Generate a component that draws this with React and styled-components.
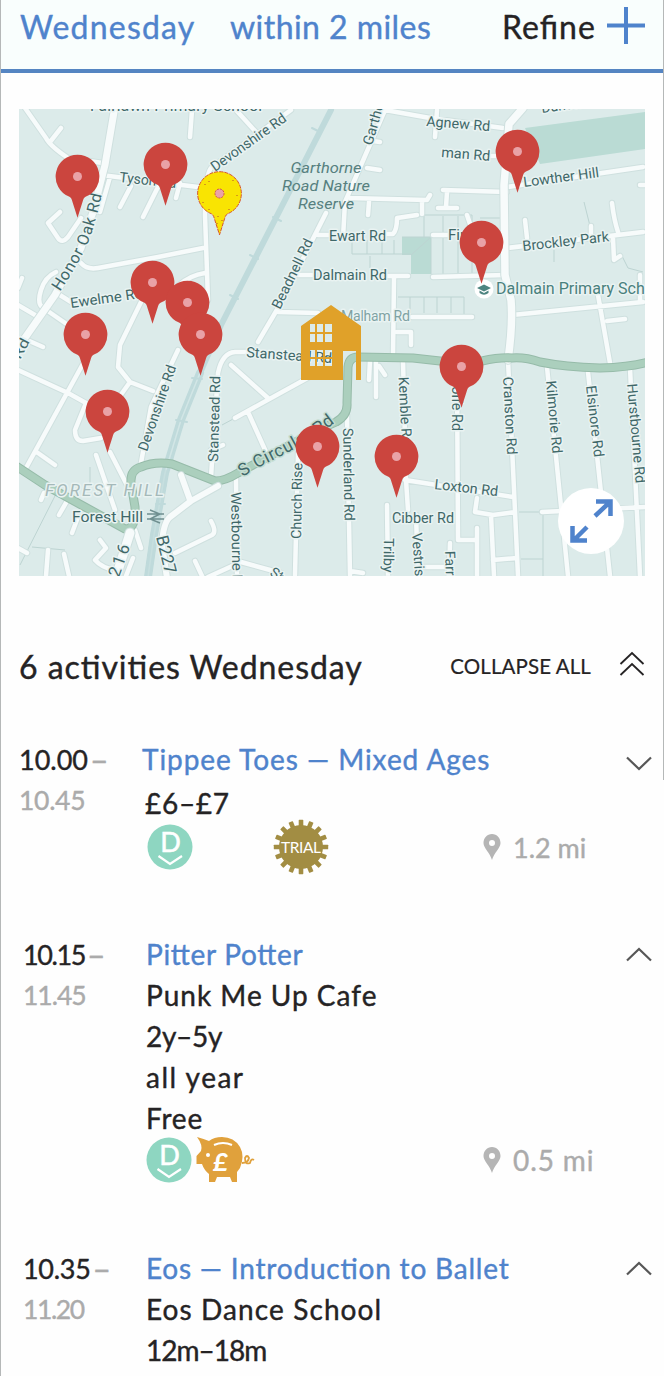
import React from "react";
import styled, { createGlobalStyle } from "styled-components";

const GlobalStyle = createGlobalStyle`
  * { box-sizing: border-box; }
  body { margin: 0; background: #fff; }
`;

const blue = "#4f83cc";
const ink = "#252324";
const grey = "#ababab";

const Page = styled.main`
  position: relative;
  width: 664px;
  height: 1376px;
  overflow: hidden;
  border-left: 1px solid #b5b8b8;
  font-family: Lato, "Liberation Sans", sans-serif;
  color: ${ink};
  background: #fefefe;
`;

const EdgeRule = styled.div`
  position: absolute;
  top: 0;
  right: 0;
  width: 1px;
  height: 780px;
  background: #b5b8b8;
`;

const FilterBar = styled.header`
  display: flex;
  align-items: flex-start;
  height: 73px;
  padding: 5px 19px 0 19px;
  border-bottom: 4px solid #5585c2;
  background: #f9fefd;
`;

const Label = styled.span`
  display: block;
  white-space: nowrap;
  color: ${(p) => p.$color || "inherit"};
  font-size: ${(p) => p.$size || 28}px;
  line-height: ${(p) => p.$line || 41}px;
  letter-spacing: ${(p) => p.$track || 0}px;
  font-feature-settings: "liga" 1;
  -webkit-text-stroke: ${(p) => (p.$stroke ?? 0.4)}px currentColor;
`;

const FilterLabel = styled(Label)`
  width: ${(p) => p.$width}px;
`;

const Spacer = styled.div`
  flex: 1;
`;

const PlusIcon = styled.svg`
  width: 38px;
  height: 40px;
`;

const MapPanel = styled.section`
  position: relative;
  width: 626px;
  height: 467px;
  margin: 36px 0 0 18px;
  overflow: hidden;
  background: #dcebea;
`;

const MapArt = styled.svg`
  display: block;
  width: 626px;
  height: 467px;
  font-family: Roboto, sans-serif;
`;

const Marker = styled.svg`
  position: absolute;
  left: ${(p) => p.$x - 19 - 22.5}px;
  top: ${(p) => p.$y - 109 - 23}px;
  width: 45px;
  height: 65px;
`;

const House = styled.svg`
  position: absolute;
  left: 281px;
  top: 195px;
  width: 62px;
  height: 77px;
`;

const ExpandButton = styled.button`
  position: absolute;
  right: 21px;
  bottom: 22px;
  width: 66px;
  height: 66px;
  padding: 0;
  border: 0;
  border-radius: 50%;
  background: #fff;
`;

const SummaryBar = styled.div`
  display: flex;
  align-items: center;
  height: 46px;
  margin-top: 67px;
  padding: 0 19px 0 18px;
`;

const DoubleChevron = styled.svg`
  width: 26px;
  height: 26px;
  margin: -5px 0 0 28px;
`;

const Activity = styled.article`
  display: grid;
  grid-template-columns: ${(p) => p.$timeWidth}px 1fr 26px;
  height: ${(p) => p.$height}px;
  margin-top: ${(p) => p.$gap || 0}px;
  padding: 0 12px 0 ${(p) => p.$inset}px;
`;

const TimeColumn = styled.div``;

const TimeRow = styled.div`
  display: flex;
  gap: 2px;
`;

const Details = styled.div`
  display: flex;
  flex-direction: column;
`;

const Price = styled(Label)`
  padding: 3px 0 0 3px;
`;

const BadgeRow = styled.div`
  display: flex;
  align-items: center;
  height: 46px;
  margin-left: ${(p) => p.$shift || 0}px;
  margin-top: ${(p) => p.$top || 0}px;
`;

const BadgeIcon = styled.svg`
  flex: none;
  width: ${(p) => p.$w}px;
  height: ${(p) => p.$h}px;
  margin-left: ${(p) => p.$left || 0}px;
  overflow: visible;
`;

const Distance = styled.div`
  display: flex;
  align-items: center;
  gap: 12px;
  width: 143px;
  margin-left: auto;
`;

const Chevron = styled.svg`
  width: 26px;
  height: 15px;
  margin-top: ${(p) => p.$top}px;
`;

const LocalRoad = ({ d, w = 4.5 }) => (
  <>
    <path d={d} stroke="#cfe0df" strokeWidth={w + 2} />
    <path d={d} stroke="#f7fbfb" strokeWidth={w} />
  </>
);

const minorRoads = `M25 108L46 138Q50 146 68 158L103 163M50 142L61 128M101 175L198 187M131 186L120 207M158 187L143 217M180 183L176 198
M192 110L190 137M236 110L256 132M291 110L211 168Q205 175 205 215L208 300M110 177L100 212M60 212L48 223L58 238Q62 244 68 237L81 218
M81 263Q87 270 98 268L158 257L203 248M178 286Q190 275 205 273M56 272Q45 277 41 290Q37 303 42 307L68 325M18 305L35 315M22 278L18 288
M55 292L71 302M141 302L120 345L118 367L130 382L153 391M130 382L115 403
M326 213L278 308L258 342M318 235H330M298 275H315M278 312L318 313
M385 110L345 202L343 238M385 110L430 118L503 128M437 110L435 137M367 168L380 170M373 141L380 142M350 198L427 200L430 195M369 202L368 215M422 202V214
M443 190L507 192M447 192L446 207M438 208H457M488 156H505M507 187L643 167M507 248L643 232M525 220L527 238M612 203Q614 220 618 232M613 238L614 260L620 256M591 226V235
M385 234H393Q397 230 397 218L417 215M433 235H450M467 215L470 224M388 276H408M433 277L505 275M394 277L393 357M412 317H472M397 332H411V345
M512 315L643 302M598 295L610 363M607 321L625 319M640 275V302M640 185H645
M85 360L26 468M18 370L68 393L86 403L75 430Q75 441 83 441L101 438M38 453L55 465M96 455L115 510M110 452L128 487M178 350L151 407L141 463M27 340L43 347
M248 352H235Q222 353 218 373L211 477M231 365L268 398M235 418L313 375M248 412L266 452M211 450L223 445M236 478L237 575M298 453L295 575
M175 553L212 535Q217 532 211 521M195 561L202 576M208 577L241 562L281 573M100 540L106 548L95 560Q102 568 115 570M48 550L46 576M64 554L69 576M133 558L126 576M135 530L141 548M44 493L41 500M67 501L59 515M78 517L72 533M18 548L27 553
M347 415L350 575M350 571L363 573M403 360L404 400L406 480L408 510M457 373L458 540H477M477 528V576M450 543L449 576M405 480L513 497
M508 360L518 576M547 367L568 576M588 372L610 576M630 368L640 576M477 498L475 512L493 515L515 512M491 515L494 576M493 560L517 558M542 512L645 507
M387 505L388 576M416 515L418 576M420 567H450M370 360L369 380M376 362V397M379 366L385 375`;

const southCircular =
  "M16 466L45 485L85 507L125 529Q136 530 135 507L131 483Q130 470 141 467Q155 461 172 464L215 481Q225 481 238 473L318 430L336 422Q348 415 347 403L348 367Q349 357 358 357L413 358L440 361L482 361Q500 357 512 358Q525 357 540 362Q565 367 600 368Q630 367 648 362";

const mapLabels = [
  ["Devonshire Rd", 215, 172, -35.5, 89],
  ["Tyson Rd", 119, 182, 6, 57],
  ["Ewelme Rd", 71, 308, -8, 73],
  ["Garthorne Rd", 372, 146, -74, 85],
  ["Beadnell Rd", 280, 310, -64, 76],
  ["Agnew Rd", 426, 126, 4.5, 64],
  ["man Rd", 441, 157, 4.5, 49],
  ["Dunstans Rd", 542, 113, -8, 78],
  ["Lowther Hill", 524, 187, -7.5, 76],
  ["Ewart Rd", 329, 240.5, 0, 57],
  ["Dalmain Rd", 313, 280, 0, 74],
  ["Firs", 448, 239.5, 0, 25],
  ["Brockley Park", 523, 251, -6.5, 87],
  ["Stanstead Rd", 246, 357, 4, 86],
  ["Stanstead Rd", 218, 462, -88.5, 86],
  ["Devonshire Rd", 147, 452, -71, 90],
  ["Westbourne Rd", 231, 492, 89, 100],
  ["Church Rise", 301, 539, -89, 76],
  ["Sunderland Rd", 343, 428, 89, 93],
  ["Kemble Rd", 398.5, 377, 87, 68],
  ["Colfe Rd", 451.5, 377, 90, 54],
  ["Cranston Rd", 503, 377, 87, 78],
  ["Kilmorie Rd", 546, 381, 85, 73],
  ["Elsinore Rd", 586, 386, 83.5, 72],
  ["Hurstbourne Rd", 627, 384, 85, 100],
  ["Loxton Rd", 434, 489, 6.5, 64],
  ["Cibber Rd", 392, 522.5, 0, 62],
  ["Trilby Rd", 384, 538, 91, 55],
  ["Vestris Rd", 412, 533, 86, 64],
  ["Farren Rd", 445, 551, 88, 60],
  ["Forest Hill", 72, 521.5, 0, 71],
  ["Rd", 20, 360, -62, 21],
];

const halo = { stroke: "#e9f3f2", strokeWidth: 3, paintOrder: "stroke", strokeLinejoin: "round" };

function MapDrawing() {
  return (
    <MapArt viewBox="19 109 626 467">
      <path d="M525 128L645 112V149L540 164Z" fill="#badbd4" />
      <path d="M402 237H431V274H411V255H402Z" fill="#badbd4" />
      <path
        d="M402 237H431M431 274V237L411 255M424 215V237M412 215H472V274M443 216V274M458 216V274M352 239V254H411M367 240V254M382 240V254M394 240V254M370 256V268M398 297H464V315M410 297V313M424 297V313M437 297V313M451 297V313M480 218H501M584 202L591 230M554 250V262M622 256L628 268L643 272M90 467V484M58 490L20 565M32 547L65 550M519 512H543V576M521 559H543M222 425L235 418"
        fill="none" stroke="#bdd4d2" strokeWidth="1"
      />
      <g fill="none" strokeLinecap="round" strokeLinejoin="round">
        <LocalRoad d={minorRoads} />
        <LocalRoad d="M115 106L105 165L93 212L81 248L55 295L20 345" w={7} />
        <LocalRoad d="M523 108L509 124L504 185L505 275L511 300Q513 325 508 360" w={7.5} />
        <path d="M331 110L281 208L221 325L200 373L181 420L165 473L154 535L148 577" stroke="#bfdadb" strokeWidth="6" />
        <path d="M200 373L181 420L165 473L154 535L148 577" stroke="#bfdadb" strokeWidth="8" />
        <path d="M200 373L181 420L165 473L154 535L148 577" stroke="#d2e6e6" strokeWidth="1.5" />
        <path d="M312 128L320 132M273 217L281 221M250 255L258 259M230 295L238 299M192 378L202 379M176 420L187 422M156 504H165" stroke="#bfdadb" strokeWidth="2" />
        <path d={southCircular} stroke="#96bba9" strokeWidth="9" />
        <path d={southCircular} stroke="#abcfbd" strokeWidth="7" />
        <LocalRoad d="M218 486L191 501L170 517Q163 523 162 545L167 578M181 475L190 500" w={6} />
        <LocalRoad d="M130 533L115 580" w={9} />
        <path d="M165 473L154 535L148 577" stroke="#bfdadb" strokeWidth="7" strokeOpacity=".6" />
      </g>

      <g fill="#3f6869" fontSize="14.2">
        {mapLabels.map(([text, x, y, angle, length], i) => (
          <text key={i} x={x} y={y} textLength={length} lengthAdjust="spacingAndGlyphs" transform={`rotate(${angle} ${x} ${y})`} {...halo}>
            {text}
          </text>
        ))}
        <text x="341" y="320.500" textLength="69" fill="#7fa2a3" {...halo}>Malham Rd</text>
        <text x="90" y="111" fontSize="15.5" textLength="172" {...halo}>Fairlawn Primary School</text>
        <path id="honor" d="M60 292Q79 263 88 243Q95 225 103 190" fill="none" />
        <text fontSize="16" {...halo}><textPath href="#honor" textLength="107">Honor Oak Rd</textPath></text>
        <path id="scirc" d="M243 477C263 462 300 451 337 421" fill="none" />
        <text fontSize="17.5" {...halo} stroke="#c5ddd2"><textPath href="#scirc" textLength="107">S Circular Rd</textPath></text>
        <text x="110" y="602" fontSize="17" textLength="59" transform="rotate(-70 110 602)" {...halo}>B2216</text>
        <text x="156" y="537" fontSize="17" textLength="39" transform="rotate(76 156 537)" {...halo}>B227</text>
        <text x="269" y="575" fontSize="14" transform="rotate(30 269 575)" {...halo}>St</text>
        <g fontStyle="italic" fontSize="15" fill="#56807f" textAnchor="middle">
          <text x="326" y="173" textLength="71" lengthAdjust="spacingAndGlyphs">Garthorne</text>
          <text x="326" y="191" textLength="88" lengthAdjust="spacingAndGlyphs">Road Nature</text>
          <text x="326" y="209" textLength="56" lengthAdjust="spacingAndGlyphs">Reserve</text>
        </g>
      </g>
      <text x="45" y="496" textLength="119" fontSize="17" fontStyle="italic" fill="#a5b9b9" {...halo}>FOREST HILL</text>
      <path d="M147 514H164M147 519H164M150 510L160 514L150 519L160 523" fill="none" stroke="#6f8f90" strokeWidth="1.4" />
      <circle cx="484" cy="289" r="9.5" fill="#fff" />
      <path d="M477 288L484 284.500L491 288L484 291.500ZM479.500 290.500V293Q484 296.500 488.500 293V290.500L484 293Z" fill="#4d8480" />
      <text x="496" y="293.500" fontSize="16" textLength="171" lengthAdjust="spacingAndGlyphs" fill="#49807d" {...halo}>Dalmain Primary School</text>
    </MapArt>
  );
}

const pins = [
  [77, 177], [165, 165], [219, 193.5, true], [152, 283], [187, 303], [85, 335], [200, 335],
  [107, 412], [317.5, 446.5], [396, 456.5], [461, 367], [481, 243], [517.5, 151.5],
];

const Pin = ({ x, y, active }) => (
  <Marker $x={x} $y={y} viewBox="0 0 45 65">
    <path
      d="M22.500 .700A21.800 21.800 0 0 1 31 42.600Q28.500 43.500 27.500 48L22.500 63.800L17.500 48Q16.500 43.500 14 42.600A21.800 21.800 0 0 1 22.500 .700Z"
      fill={active ? "#f9e402" : "#cb453e"}
      stroke={active ? "#d6532d" : "none"}
      strokeWidth="1"
      strokeDasharray={active ? "4 1" : undefined}
    />
    {active && <path d="M8 13v1M12 10v1M36 9v1M6 31v1M12 38v1M40 24v1M21 45v1M25 49v1M20 52v1M32 38v1" stroke="#b6502c" />}
    <circle cx="22.500" cy="22.500" r="4.500" fill="#e9a2a7" stroke={active ? "#d0504a" : "none"} strokeDasharray="2 1" />
  </Marker>
);

const HouseMarker = () => (
  <House viewBox="0 0 62 77">
    <path
      fillRule="evenodd"
      fill="#e0a129"
      d="M31 1L61 22V76H56V47H43V76H1V22ZM10 20V28H15V20ZM17 20V28H23V20ZM25 20V28H32V20ZM10 30V38H15V30ZM17 30V38H23V30ZM25 30V38H32V30ZM10 46V53H15V46ZM17 46V53H23V46ZM25 46V53H32V46ZM10 55V62H15V55ZM17 55V62H23V55ZM25 55V62H32V55Z"
    />
  </House>
);

const ValleyBadge = ({ left }) => (
  <BadgeIcon $w={46} $h={46} $left={left} viewBox="0 0 46 46">
    <circle cx="23" cy="23" r="22.500" fill="#8ed6c1" />
    <text x="23.500" y="28" textAnchor="middle" fontFamily="Lato" fontSize="27" fill="#fff" stroke="#fff" strokeWidth=".6">D</text>
    <path d="M11.500 32L23 40L35 32" fill="none" stroke="#fff" strokeWidth="2.200" />
  </BadgeIcon>
);

const TrialBadge = () => (
  <BadgeIcon $w={56} $h={56} $left={80} viewBox="0 0 56 56">
    {Array.from({ length: 16 }, (_, i) => (
      <rect key={i} x="25.700" y=".8" width="4.600" height="8" rx=".6" fill="#a28d43" transform={`rotate(${i * 22.5} 28 28)`} />
    ))}
    <circle cx="28" cy="28" r="22" fill="#a28d43" />
    <text x="28" y="33.500" textAnchor="middle" textLength="40" fontFamily="Lato" fontSize="15.500" fill="#fff">TRIAL</text>
  </BadgeIcon>
);

const PiggyBadge = () => (
  <BadgeIcon $w={60} $h={46} $left={4} viewBox="0 0 60 46">
    <path
      fill="#e0a13c"
      d="M1 0Q8 2 13 4Q18 0 26 0Q38 0 44 10Q49 19 44 31L41 35V45H36L34 40H21L19 45H13V37Q8 33 6 27H.5V19L5 14Q7 8 1 0Z"
    />
    <path d="M18 8Q27 4 36 8" fill="none" stroke="#fff" strokeWidth="2" />
    <circle cx="12" cy="18" r="2" fill="#fff" />
    <text x="24.500" y="33.500" textAnchor="middle" fontFamily="Lato" fontWeight="900" fontStyle="italic" fontSize="25" fill="#fff">£</text>
    <path d="M46 26Q52 26 53 21Q51 17 49 21Q49 28 54 26Q55 21 58 23" fill="none" stroke="#e0a13c" strokeWidth="1.800" />
  </BadgeIcon>
);

const MilesAway = ({ children, track, size = 27 }) => (
  <Distance>
    <svg width="18" height="26" viewBox="0 0 18 26">
      <path fillRule="evenodd" fill="#b5b5b5" d="M9 0C14 0 17.500 4 17.500 9C17.500 14 11 19 9 26C7 19 .5 14 .5 9C.5 4 4 0 9 0ZM9 6A3 3 0 1 0 9 12A3 3 0 1 0 9 6Z" />
    </svg>
    <Label $color={grey} $size={size} $track={track}>{children}</Label>
  </Distance>
);

const Toggle = ({ open, top }) => (
  <Chevron $top={top} viewBox="0 0 26 15">
    <path d={open ? "M1 13.500L13 2L25 13.500" : "M1 1.500L13 13L25 1.500"} fill="none" stroke="#575757" strokeWidth="2.200" />
  </Chevron>
);

const Times = ({ start, end, track, endTrack }) => (
  <TimeColumn>
    <TimeRow>
      <Label $size={27} $track={track}>{start}</Label>
      <Label $color={grey} $size={32}>–</Label>
    </TimeRow>
    <Label $color={grey} $size={26.5} $track={endTrack}>{end}</Label>
  </TimeColumn>
);

export default function App() {
  return (
    <Page>
      <GlobalStyle />
      <FilterBar>
        <FilterLabel $color={blue} $size={32} $width={210} $line={43} $track={1.2}>Wednesday</FilterLabel>
        <FilterLabel $color={blue} $size={32} $width={210} $line={43} $track={0.45}>within 2 miles</FilterLabel>
        <Spacer />
        <FilterLabel $size={32} $width={105} $line={43} $track={1}>Refine</FilterLabel>
        <PlusIcon viewBox="0 0 38 40">
          <path d="M0 20.500H38M19 2V39" stroke={blue} strokeWidth="4" />
        </PlusIcon>
      </FilterBar>

      <MapPanel>
        <MapDrawing />
        {pins.map(([x, y, active]) => (
          <Pin key={`${x}-${y}`} x={x} y={y} active={active} />
        ))}
        <HouseMarker />
        <ExpandButton aria-label="Expand map">
          <svg width="66" height="66" viewBox="0 0 66 66">
            <path d="M37 28L52 14M38 13.500H52.500V28M29 39L15 53M14.500 38V52.500H29" fill="none" stroke={blue} strokeWidth="4.500" />
          </svg>
        </ExpandButton>
      </MapPanel>

      <SummaryBar>
        <Label $size={32} $track={0.95}>6 activities Wednesday</Label>
        <Spacer />
        <Label $size={20.5} $track={0.1} $stroke={0.2} $line={43}>COLLAPSE ALL</Label>
        <DoubleChevron viewBox="0 0 26 26">
          <path d="M1.500 13L13 2L24.500 13M1.500 24L13 13L24.500 24" fill="none" stroke={ink} strokeWidth="1.800" />
        </DoubleChevron>
      </SummaryBar>

      <Activity $timeWidth={123} $inset={18} $height={195} $gap={50}>
        <Times start="10.00" end="10.45" endTrack={-0.3} />
        <Details>
          <Label $color={blue} $track={0.95}>Tippee Toes — Mixed Ages</Label>
          <Price $track={0.7}>£6–£7</Price>
          <BadgeRow $shift={5}>
            <ValleyBadge />
            <TrialBadge />
            <MilesAway>1.2 mi</MilesAway>
          </BadgeRow>
        </Details>
        <Toggle top={17} />
      </Activity>

      <Activity $timeWidth={123} $inset={22} $height={314}>
        <Times start="10.15" end="11.45" track={-1.4} endTrack={-1} />
        <Details>
          <Label $color={blue} $track={0.7}>Pitter Potter</Label>
          <Label $track={1}>Punk Me Up Cafe</Label>
          <Label $track={-0.3}>2y–5y</Label>
          <Label $track={1.5}>all year</Label>
          <Label $track={0.8}>Free</Label>
          <BadgeRow $top={-2}>
            <ValleyBadge />
            <PiggyBadge />
            <MilesAway size={28} track={0.9}>0.5 mi</MilesAway>
          </BadgeRow>
        </Details>
        <Toggle open top={13} />
      </Activity>

      <Activity $timeWidth={123} $inset={22} $height={129}>
        <Times start="10.35" end="11.20" track={-0.3} endTrack={-1.4} />
        <Details>
          <Label $color={blue} $track={0.8}>Eos — Introduction to Ballet</Label>
          <Label $track={1.1}>Eos Dance School</Label>
          <Label $track={-1}>12m–18m</Label>
        </Details>
        <Toggle open top={13} />
      </Activity>
      <EdgeRule />
    </Page>
  );
}
